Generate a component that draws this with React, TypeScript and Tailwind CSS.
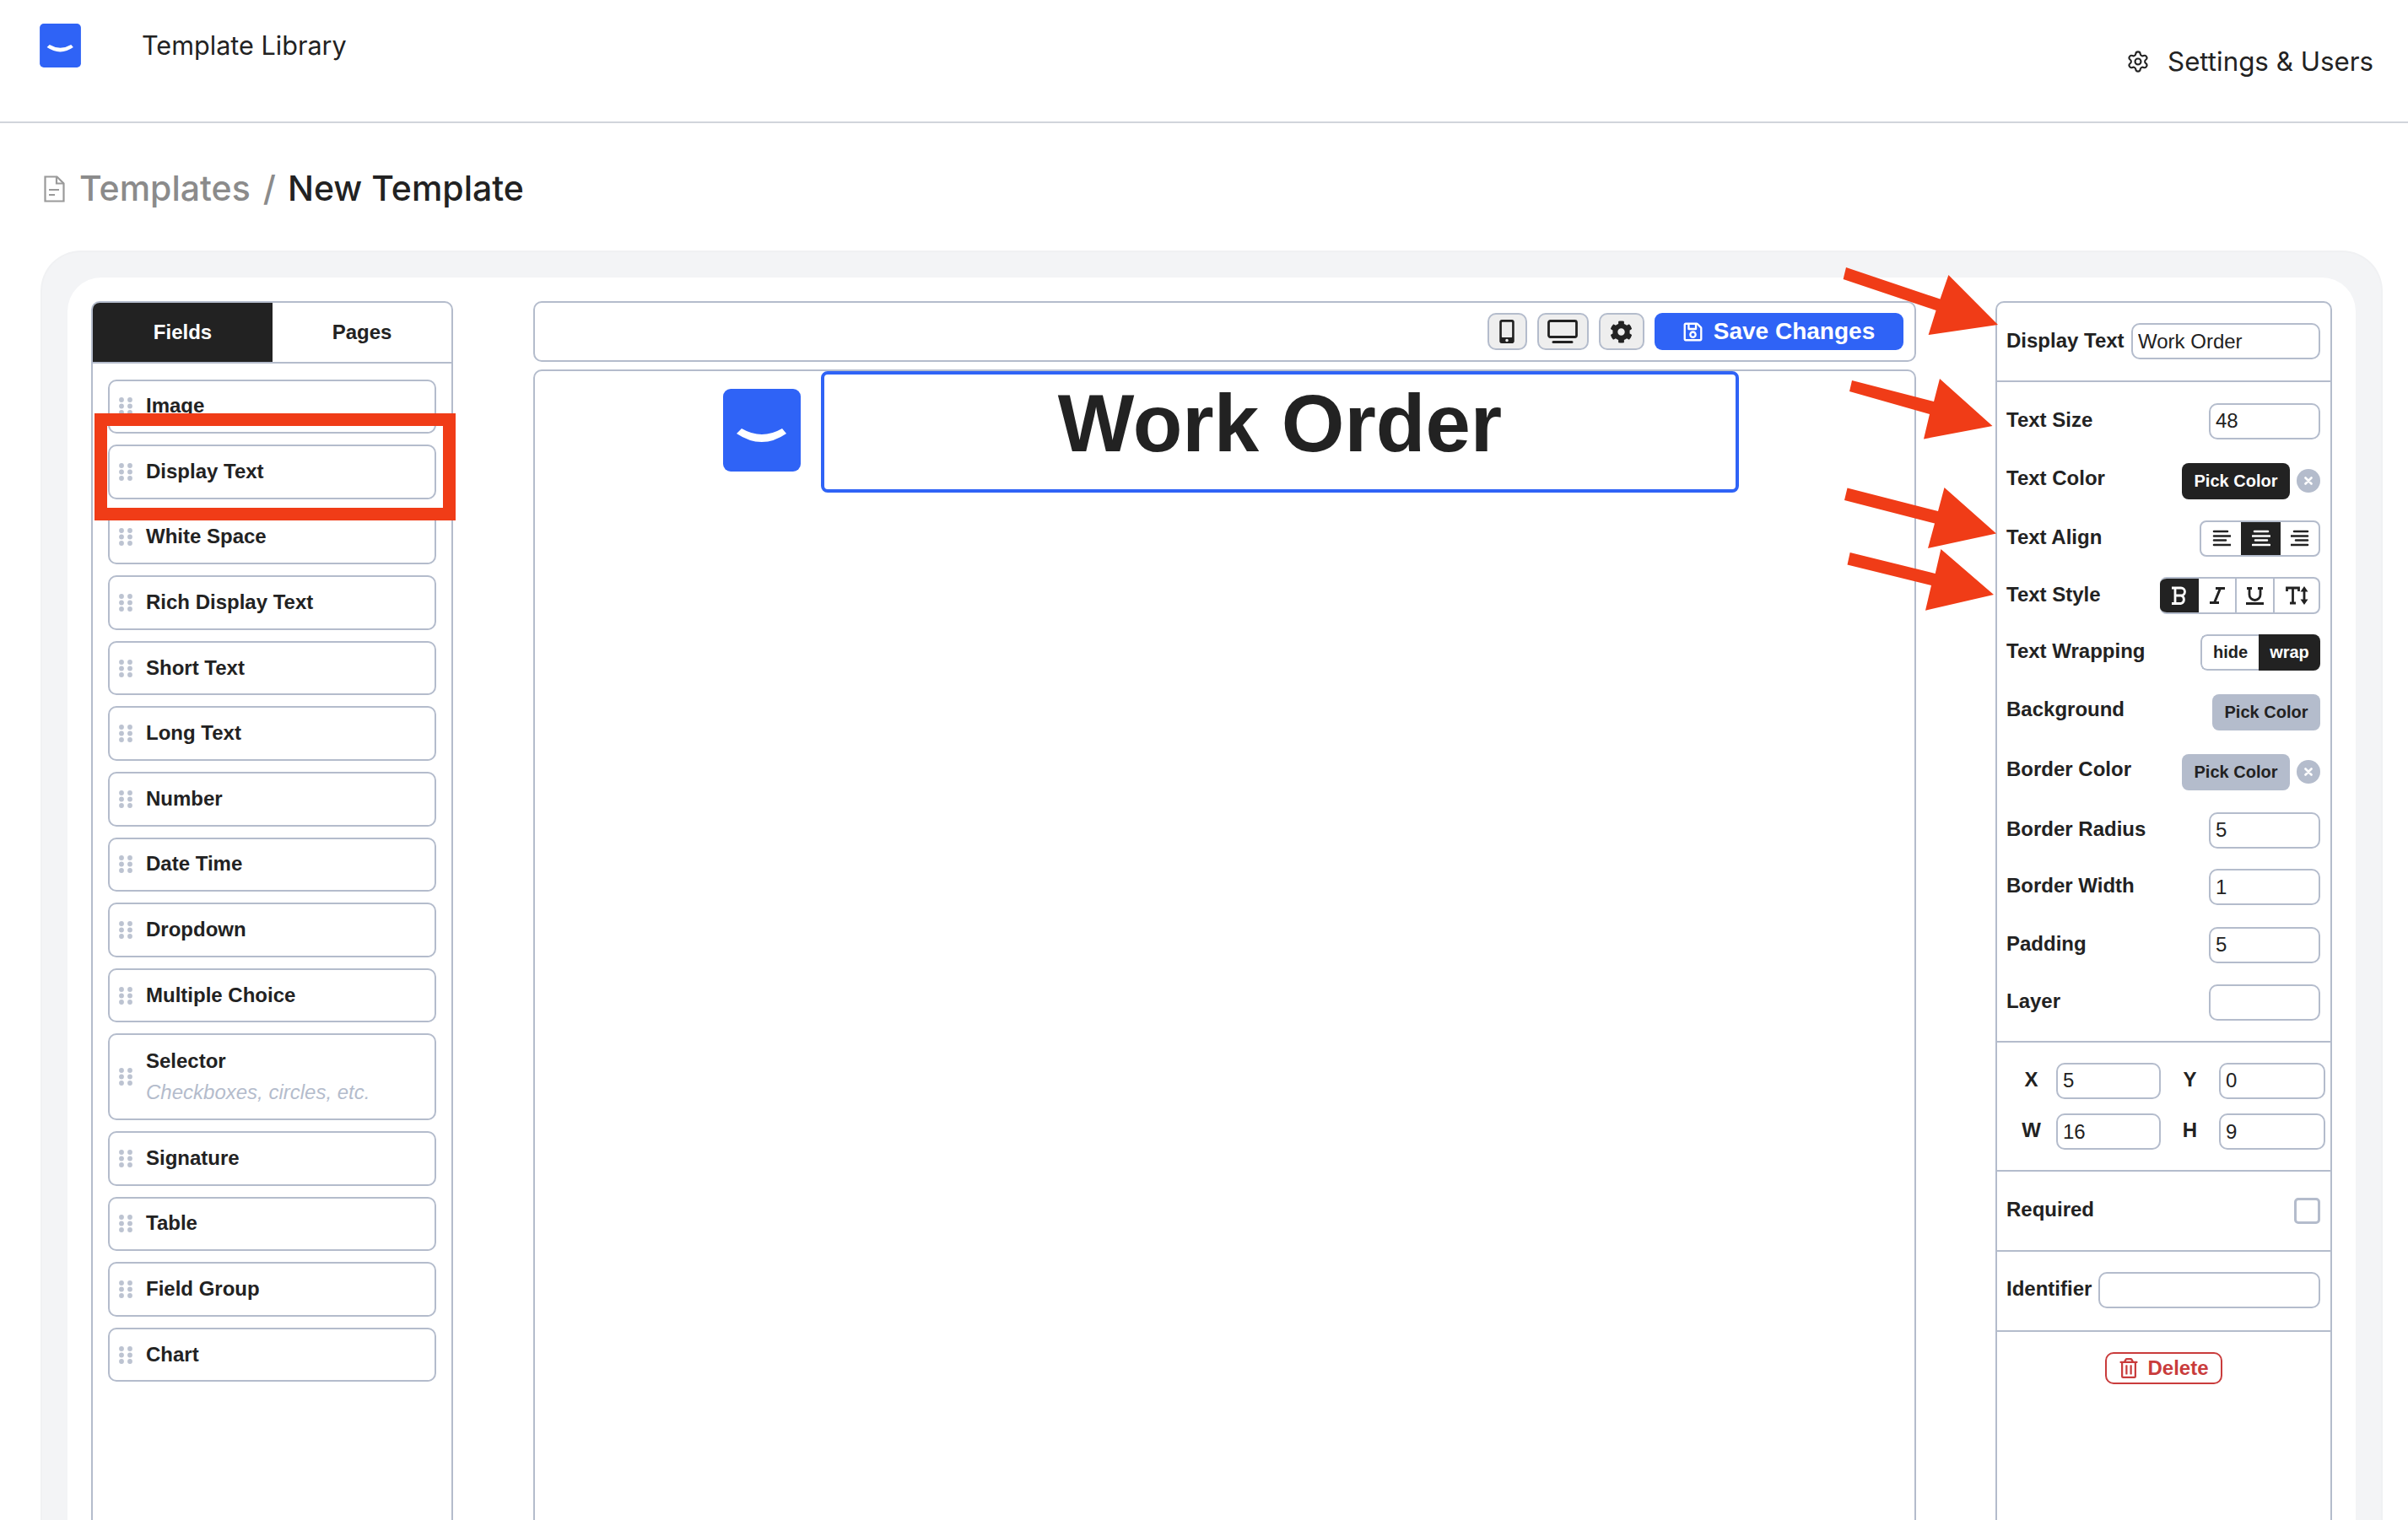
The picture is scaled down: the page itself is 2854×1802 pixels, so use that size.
import { ReactNode } from "react"
import { Settings } from "lucide-react"
import { FaCog, FaMobileAlt, FaRegSave, FaRegTrashAlt } from "react-icons/fa"

const fields = [
  "Image",
  "Display Text",
  "White Space",
  "Rich Display Text",
  "Short Text",
  "Long Text",
  "Number",
  "Date Time",
  "Dropdown",
  "Multiple Choice",
  "Selector",
  "Signature",
  "Table",
  "Field Group",
  "Chart",
]

function Logo({ className }: { className: string }) {
  return (
    <svg className={className} viewBox="0 0 92 98">
      <rect width="92" height="98" rx="9" fill="#2f63f6" />
      <path d="M16 53 L22 47 Q46 61 70 47 L75 53 Q46 73 16 53Z" fill="#fff" />
    </svg>
  )
}

function Grip() {
  return (
    <svg className="w-[16px] h-[21px] shrink-0" viewBox="0 0 16 21" fill="#bcc3d1">
      <circle cx="3" cy="3" r="2.9" />
      <circle cx="13" cy="3" r="2.9" />
      <circle cx="3" cy="10.5" r="2.9" />
      <circle cx="13" cy="10.5" r="2.9" />
      <circle cx="3" cy="18" r="2.9" />
      <circle cx="13" cy="18" r="2.9" />
    </svg>
  )
}

function FieldItem({ name }: { name: string }) {
  const selector = name === "Selector"
  return (
    <div className={`flex items-center gap-[16px] pl-[11px] border-2 border-[#b4bccc] rounded-[10px] ${selector ? "h-[102.5px]" : "h-[64.6px]"}`}>
      <Grip />
      <div className="pb-[1px]">
        <div className="text-[24px] leading-[30px] font-bold text-[#222]">{name}</div>
        {selector && <div className="mt-[8px] text-[24px] leading-[28px] italic text-[#b4bccc]">Checkboxes, circles, etc.</div>}
      </div>
    </div>
  )
}

function Field({ value = "", className = "" }: { value?: string; className?: string }) {
  return (
    <input
      defaultValue={value}
      className={`h-[43px] min-w-0 border-2 border-[#b4bccc] rounded-[10px] pl-[6px] text-[24px] text-[#222] bg-white outline-none ${className}`}
    />
  )
}

function Row({ label, lift = false, className = "", children }: { label: string; lift?: boolean; className?: string; children: ReactNode }) {
  return (
    <div className={`flex items-center justify-between h-[43px] ${className}`}>
      <span className={`text-[24px] font-bold text-[#222] ${lift ? "pb-[6px]" : "pb-[3px]"}`}>{label}</span>
      <div className="flex items-center">{children}</div>
    </div>
  )
}

function PickColor({ dark = false, clear = false }: { dark?: boolean; clear?: boolean }) {
  return (
    <>
      <button className={`h-[43px] w-[128px] rounded-[8px] text-[20px] font-bold ${dark ? "bg-[#222] text-white" : "bg-[#b4bccc] text-[#222]"}`}>Pick Color</button>
      {clear && (
        <span className="ml-[8px] w-[28px] h-[28px] rounded-full bg-[#b4bccc] flex items-center justify-center text-white">
          <svg className="w-[10px] h-[10px]" viewBox="0 0 10 10" stroke="#fff" strokeWidth="2.6" strokeLinecap="round">
            <path d="M1.5 1.5 8.5 8.5M8.500 1.5 1.5 8.5" />
          </svg>
        </span>
      )}
    </>
  )
}

function AlignIcon({ d, light = false }: { d: string; light?: boolean }) {
  return (
    <svg className="w-[22px] h-[22px]" viewBox="0 0 22 22" fill="none" stroke={light ? "#fff" : "#222"} strokeWidth="2.6" strokeLinecap="round">
      <path d={d} />
    </svg>
  )
}

function Arrow({ points }: { points: string }) {
  return <polygon points={points} fill="#f03c17" />
}

export default function App() {
  return (
    <div className="relative h-[1802px] overflow-hidden bg-white flex flex-col font-['Liberation_Sans',Arial,sans-serif]">
      <header className="h-[146px] shrink-0 border-b-2 border-[#d1d5db] flex justify-between pl-[47px] pr-[41px] font-['Inter',sans-serif] text-[#222]">
        <div className="flex items-start pt-[28px]">
          <Logo className="w-[49px] h-[52px]" />
          <span className="ml-[72px] text-[30.6px] leading-[52px]">Template Library</span>
        </div>
        <div className="flex items-center gap-[21px] pt-[2px]">
          <Settings size={28} strokeWidth={1.8} />
          <span className="text-[31.3px]">Settings &amp; Users</span>
        </div>
      </header>

      <div className="h-[151px] shrink-0 flex items-center pl-[52px] pt-[5px] font-['Inter',sans-serif] font-medium text-[41px]">
        <svg className="w-[25px] h-[32px]" viewBox="0 0 25 32" fill="none" stroke="#9a9a9a" strokeWidth="2.2">
          <path d="M1.5 1.5h14l8 8v21h-22z" />
          <path d="M15 1.5v8h8.5M6 17h12M6 23h7" />
        </svg>
        <span className="ml-[17px] text-[#8b8b8b]">Templates</span>
        <span className="ml-[15px] text-[#8b8b8b]">/</span>
        <span className="ml-[14px] text-[#222]">New Template</span>
      </div>

      <div className="flex-1 min-h-0 ml-[48px] mr-[30px] rounded-t-[48px] bg-[#f3f4f6] border-t-2 border-x-2 border-[#f0f1f3] pt-[30px] px-[30px] overflow-hidden">
        <div className="h-full rounded-t-[40px] bg-white px-[28px] pt-[28px] flex justify-between">
          <aside className="w-[429px] h-[1600px] shrink-0 border-2 border-[#b4bccc] rounded-t-[10px] overflow-hidden">
            <div className="flex h-[72px] border-b-2 border-[#b4bccc] text-[24px] font-bold">
              <div className="w-[213px] bg-[#222] text-white flex items-center justify-center">Fields</div>
              <div className="flex-1 text-[#222] flex items-center justify-center">Pages</div>
            </div>
            <div className="flex flex-col gap-[13px] px-[18px] pt-[18.5px]">
              {fields.map((f) => (
                <FieldItem key={f} name={f} />
              ))}
            </div>
          </aside>

          <main className="w-[1639px] shrink-0 flex flex-col gap-[9px]">
            <div className="h-[72px] shrink-0 border-2 border-[#b4bccc] rounded-[10px] flex items-center justify-end gap-[12px] pr-[13px]">
              <button className="w-[47px] h-[44px] bg-[#eee] border-2 border-[#b4bccc] rounded-[10px] flex items-center justify-center text-[#222]">
                <FaMobileAlt size={28} />
              </button>
              <button className="w-[61px] h-[44px] bg-[#eee] border-2 border-[#b4bccc] rounded-[10px] flex items-center justify-center">
                <svg className="w-[36px] h-[28px]" viewBox="0 0 36 28" fill="none" stroke="#222" strokeWidth="2.8">
                  <rect x="1.5" y="1.5" width="33" height="19" rx="2" />
                  <path d="M7 26.5h22" strokeWidth="3" strokeLinecap="round" />
                </svg>
              </button>
              <button className="w-[54px] h-[44px] bg-[#eee] border-2 border-[#b4bccc] rounded-[10px] flex items-center justify-center text-[#222]">
                <FaCog size={27} />
              </button>
              <button className="w-[295px] h-[44px] bg-[#2f63f6] rounded-[9px] flex items-center justify-center gap-[12px] text-white text-[28px] font-bold">
                <FaRegSave size={25} />
                Save Changes
              </button>
            </div>
            <div className="h-[1500px] shrink-0 border-2 border-[#b4bccc] rounded-t-[10px] flex items-start pl-[223.5px]">
              <Logo className="w-[92px] h-[98px] mt-[21px]" />
              <div className="ml-[24px] w-[1088px] h-[144px] border-4 border-[#2f63f6] rounded-[8px] text-center text-[96px] leading-[116px] font-bold text-[#222]">Work Order</div>
            </div>
          </main>

          <aside className="w-[399px] h-[1600px] shrink-0 border-2 border-[#b4bccc] rounded-t-[10px] text-[#222]">
            <section className="border-b-2 border-[#b4bccc] pt-[24px] pb-[25px] pl-[11px] pr-[12px] flex items-center justify-between">
              <span className="text-[24px] font-bold pb-[1px]">Display Text</span>
              <Field value="Work Order" className="w-[224px]" />
            </section>

            <section className="border-b-2 border-[#b4bccc] pt-[24.5px] pb-[24.5px] pl-[11px] pr-[12px]">
              <Row label="Text Size">
                <Field value="48" className="w-[132px]" />
              </Row>
              <Row label="Text Color" lift className="mt-[28px]">
                <PickColor dark clear />
              </Row>
              <Row label="Text Align" className="mt-[25px]">
                <div className="flex h-[43px] w-[143px] border-2 border-[#b4bccc] rounded-[8px] overflow-hidden">
                  <span className="w-[47px] flex items-center justify-center">
                    <AlignIcon d="M2 3h16M2 8.5h20M2 13.500h14M2 19h20" />
                  </span>
                  <span className="w-[47px] bg-[#222] flex items-center justify-center">
                    <AlignIcon light d="M3 3h16M1 8.500h20M4 13.500h14M1 19h20" />
                  </span>
                  <span className="flex-1 flex items-center justify-center">
                    <AlignIcon d="M4 3h16M0 8.500h20M6 13.500h14M0 19h20" />
                  </span>
                </div>
              </Row>
              <Row label="Text Style" className="mt-[25px]">
                <div className="flex h-[44px] w-[190px] rounded-[8px] overflow-hidden border-2 border-[#b4bccc] border-l-0">
                  <span className="w-[46px] bg-[#222] flex items-center justify-center">
                    <svg className="w-[18px] h-[22px]" viewBox="0 0 18 22" fill="none" stroke="#fff" strokeWidth="2.8">
                      <path d="M0 2h11a4.500 4.500 0 0 1 0 9H4M11 11a5 5 0 0 1 0 9.500H0M4 2v18.500" />
                    </svg>
                  </span>
                  <span className="w-[43px] flex items-center justify-center">
                    <svg className="w-[18px] h-[20px]" viewBox="0 0 18 20" fill="none" stroke="#222" strokeWidth="3">
                      <path d="M7 1.500h11M0 18.500h11M12.500 1.500 5.500 18.500" />
                    </svg>
                  </span>
                  <span className="w-[47px] border-x-2 border-[#b4bccc] flex items-center justify-center">
                    <svg className="w-[21px] h-[21px]" viewBox="0 0 21 21" fill="none" stroke="#222" strokeWidth="2.8">
                      <path d="M4 1v8a6.500 6.500 0 0 0 13 0V1M1 1.500h6M14 1.500h6M0 19.500h21" />
                    </svg>
                  </span>
                  <span className="flex-1 flex items-center justify-center">
                    <svg className="w-[27px] h-[22px]" viewBox="0 0 27 22" fill="none" stroke="#222" strokeWidth="2.8">
                      <path d="M1.500 6V2h14v4M8.500 2v18M5 20h7M22 4v14" />
                      <path d="M17.500 6.500 22 0l4.500 6.500zM17.500 15.500 22 22l4.500-6.500z" fill="#222" stroke="none" />
                    </svg>
                  </span>
                </div>
              </Row>
              <Row label="Text Wrapping" className="mt-[24px]">
                <div className="flex h-[43px] w-[142px] text-[20px] font-bold rounded-[8px] overflow-hidden">
                  <span className="w-[69px] border-2 border-r-0 border-[#b4bccc] rounded-l-[8px] flex items-center justify-center">hide</span>
                  <span className="flex-1 bg-[#222] text-white flex items-center justify-center">wrap</span>
                </div>
              </Row>
              <Row label="Background" lift className="mt-[28px]">
                <PickColor />
              </Row>
              <Row label="Border Color" lift className="mt-[28px]">
                <PickColor clear />
              </Row>
              <Row label="Border Radius" className="mt-[26px]">
                <Field value="5" className="w-[132px]" />
              </Row>
              <Row label="Border Width" className="mt-[24.5px]">
                <Field value="1" className="w-[132px]" />
              </Row>
              <Row label="Padding" className="mt-[25.5px]">
                <Field value="5" className="w-[132px]" />
              </Row>
              <Row label="Layer" className="mt-[25px]">
                <Field className="w-[132px]" />
              </Row>
            </section>

            <section className="border-b-2 border-[#b4bccc] pt-[23.5px] pb-[24px] pl-[11px] flex flex-col gap-[17.5px] text-[24px] font-bold">
              <div className="flex items-center">
                <span className="w-[59px] text-center pb-[3px]">X</span>
                <Field value="5" className="w-[124px] font-normal" />
                <span className="w-[69px] text-center pb-[3px]">Y</span>
                <Field value="0" className="w-[126px] font-normal" />
              </div>
              <div className="flex items-center">
                <span className="w-[59px] text-center pb-[3px]">W</span>
                <Field value="16" className="w-[124px] font-normal" />
                <span className="w-[69px] text-center pb-[3px]">H</span>
                <Field value="9" className="w-[126px] font-normal" />
              </div>
            </section>

            <section className="border-b-2 border-[#b4bccc] h-[95px] pl-[11px] pr-[12px] flex items-center justify-between">
              <span className="text-[24px] font-bold pb-[3px]">Required</span>
              <span className="w-[31px] h-[31px] border-[3px] border-[#b4bccc] rounded-[5px]" />
            </section>

            <section className="border-b-2 border-[#b4bccc] pt-[24px] pb-[26px] pl-[11px] pr-[12px] flex items-center justify-between">
              <span className="text-[24px] font-bold pb-[3px]">Identifier</span>
              <Field className="w-[263px]" />
            </section>

            <section className="pt-[24px] flex justify-center">
              <button className="w-[139px] h-[38px] border-2 border-[#c93c3c] rounded-[10px] flex items-center justify-center gap-[10px] text-[#c93c3c] text-[24px] font-bold">
                <FaRegTrashAlt size={24} />
                Delete
              </button>
            </section>
          </aside>
        </div>
      </div>

      {/* red annotations drawn on top of the screenshot */}
      <div className="absolute left-[112px] top-[490px] w-[428px] h-[127px] border-[15px] border-[#f03c17]" />
      <svg className="absolute inset-0 pointer-events-none" width="2854" height="1802" viewBox="0 0 2854 1802">
        <Arrow points="2188,317 2299.500,354.500 2309.400,326 2368,385 2285.600,397 2294.600,368 2184.600,331" />
        <Arrow points="2195,451 2292,476 2299,449 2361.500,505 2280,520.500 2287,491 2192,464" />
        <Arrow points="2189.500,578.600 2297,606 2304.500,578 2366,632.600 2285,650 2293,620.500 2186,593" />
        <Arrow points="2192.700,655 2293.700,680 2300.400,651 2363,705 2282,723.700 2289,694 2189.500,669.600" />
      </svg>
    </div>
  )
}
